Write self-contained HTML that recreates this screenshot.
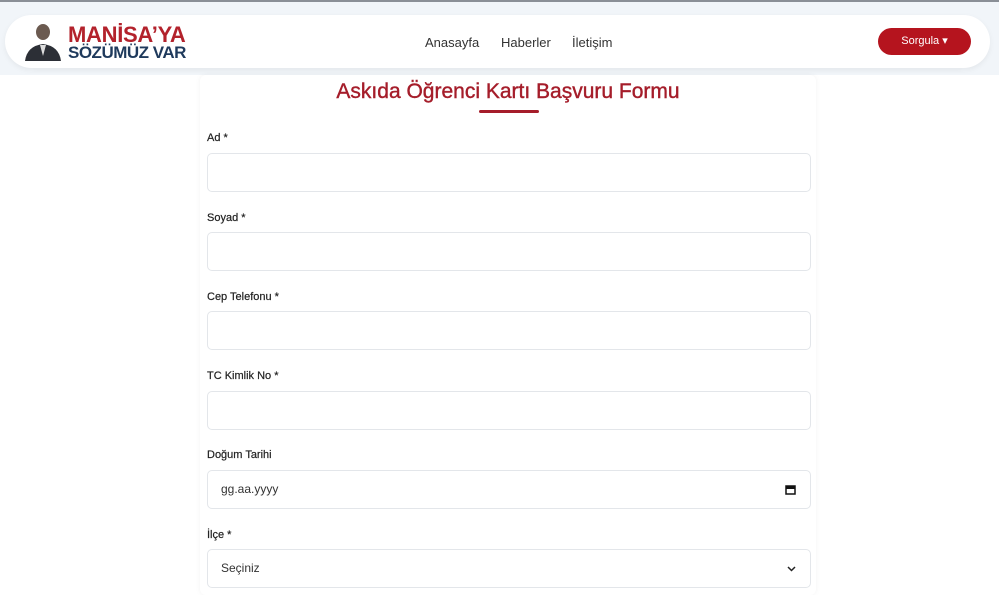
<!DOCTYPE html>
<html><head><meta charset="utf-8"><style>
*{box-sizing:border-box;margin:0;padding:0}
body{width:999px;height:590px;overflow:hidden;background:#fff;font-family:"Liberation Sans",Arial,sans-serif;position:relative}
.top{position:absolute;left:0;top:0;width:999px;height:75px;background:#f1f5f9;border-top:2px solid #8a8f96}
.nav{position:absolute;left:5px;top:15px;width:985px;height:53px;background:#fff;border-radius:27px;box-shadow:0 2px 6px rgba(0,0,0,.06)}
.logo1{position:absolute;left:68px;top:22px;font-weight:bold;font-size:22px;color:#b3222c;letter-spacing:-.3px}
.logo2{position:absolute;left:68px;top:43px;font-weight:bold;font-size:17px;color:#1f3a5c;letter-spacing:-.5px}
.links{position:absolute;top:35px;font-size:13px;color:#333}
.btn{position:absolute;left:878px;top:28px;width:93px;height:27px;background:#b5141e;border-radius:14px;color:#fff;font-size:11px;text-align:center;line-height:27px}
.card{position:absolute;left:200px;top:75px;width:616px;height:520px;background:#fff;border-radius:6px;box-shadow:0 0 6px rgba(0,0,0,.05)}
h1{position:absolute;left:200px;width:616px;top:80px;text-align:center;font-size:21px;color:#a51d2a;font-weight:normal;-webkit-text-stroke:.4px #a51d2a}
.ul{position:absolute;left:479px;top:110px;width:60px;height:3px;background:#a51d2a;border-radius:2px}
.lbl{position:absolute;left:207px;font-size:11px;color:#222;-webkit-text-stroke:.2px #222}
.in{position:absolute;left:207px;width:604px;height:39px;border:1px solid #e3e6ea;border-radius:5px;font-size:12px;color:#333;padding-left:13px;line-height:37px}
</style></head><body>
<div class="top"></div>
<div class="nav"></div>
<svg style="position:absolute;left:24px;top:20px" width="38" height="42" viewBox="0 0 38 42"><ellipse cx="19" cy="12" rx="7" ry="8" fill="#6b5a50"/><path d="M1 41 Q3 26 19 24 Q35 26 37 41Z" fill="#2c2f36"/><path d="M16 25 L19 36 L22 25Z" fill="#ddd"/></svg>
<div class="logo1">MANİSA’YA</div>
<div class="logo2">SÖZÜMÜZ VAR</div>
<div class="links" style="left:425px">Anasayfa</div>
<div class="links" style="left:501px">Haberler</div>
<div class="links" style="left:572px">İletişim</div>
<div class="btn">Sorgula &#9662;</div>
<div class="card"></div>
<h1>Askıda Öğrenci Kartı Başvuru Formu</h1>
<div class="ul"></div>
<div class="lbl" style="top:132px">Ad *</div><div class="in" style="top:153px"></div>
<div class="lbl" style="top:212px">Soyad *</div><div class="in" style="top:232px"></div>
<div class="lbl" style="top:291px">Cep Telefonu *</div><div class="in" style="top:311px"></div>
<div class="lbl" style="top:370px">TC Kimlik No *</div><div class="in" style="top:391px"></div>
<div class="lbl" style="top:449px">Doğum Tarihi</div><div class="in" style="top:470px">gg.aa.yyyy<svg style="position:absolute;right:14px;top:13px" width="11" height="11" viewBox="0 0 11 11"><rect x="1" y="2" width="9" height="8" fill="none" stroke="#111" stroke-width="1.5"/><rect x="1" y="2" width="9" height="3" fill="#111"/></svg></div>
<div class="lbl" style="top:529px">İlçe *</div><div class="in" style="top:549px">Seçiniz<svg style="position:absolute;right:14px;top:16px" width="9" height="6" viewBox="0 0 9 6"><path d="M1 1 L4.5 4.5 L8 1" fill="none" stroke="#222" stroke-width="1.5"/></svg></div>
</body></html>
